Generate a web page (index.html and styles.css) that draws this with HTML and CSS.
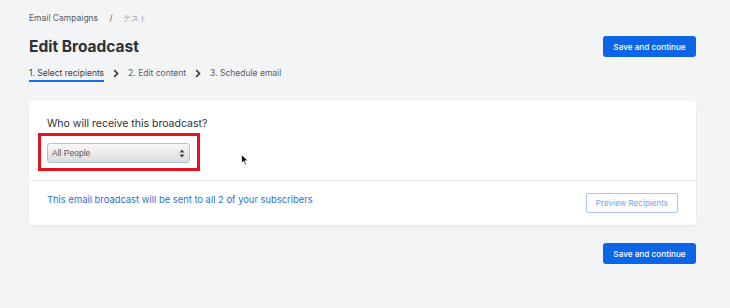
FILE: index.html
```html
<html lang="en">
<head>
    <meta charset="UTF-8">
    <title>Edit Broadcast</title>
    <link rel="stylesheet" href="styles.css">
</head>
<body>
    <div class="page">
        <div class="crumbs">
            <span class="crumb-link">Email Campaigns</span>
            <span class="crumb-sep">/</span>
            <span class="crumb-current">テスト</span>
        </div>
        <div class="head-row">
            <h1 class="title">Edit Broadcast</h1>
            <button class="btn-primary">Save and continue</button>
        </div>
        <div class="steps">
            <span class="step active">1. Select recipients</span>
            <svg class="chev" width="6" height="9" viewBox="0 0 6 9"><path d="M1.2 1.2 L4.5 4.5 L1.2 7.8" fill="none" stroke="#3a3d42" stroke-width="1.7"/></svg>
            <span class="step">2. Edit content</span>
            <svg class="chev" width="6" height="9" viewBox="0 0 6 9"><path d="M1.2 1.2 L4.5 4.5 L1.2 7.8" fill="none" stroke="#3a3d42" stroke-width="1.7"/></svg>
            <span class="step">3. Schedule email</span>
        </div>

        <div class="card">
            <div class="card-top">
                <div class="question">Who will receive this broadcast?</div>
                <div class="highlight">
                    <div class="fake-select">
                        <span>All People</span>
                        <svg width="6" height="9" viewBox="0 0 6 9"><path d="M3 0.5 L5.5 3.5 L0.5 3.5 Z M3 8.5 L5.5 5.5 L0.5 5.5 Z" fill="#444"/></svg>
                    </div>
                </div>
            </div>
            <div class="card-bottom">
                <span class="sent-note">This email broadcast will be sent to all 2 of your subscribers</span>
                <button class="btn-outline">Preview Recipients</button>
            </div>
        </div>

        <div class="foot-row">
            <button class="btn-primary">Save and continue</button>
        </div>
    </div>

    <!-- mouse pointer captured in the screenshot -->
    <svg class="cursor" width="8" height="12" viewBox="0 0 8 12"><path d="M0.5 0.5 L0.5 9 L2.6 7.2 L4 10.8 L5.4 10.2 L4 6.8 L7 6.8 Z" fill="#111" stroke="#fff" stroke-width="0.8"/></svg>
</body>
</html>
```

FILE: styles.css
```css
* {
    box-sizing: border-box;
    margin: 0;
}
body {
    background: #f3f4f6;
    font-family: 'Inter', 'Noto Sans', sans-serif;
    color: #2e3136;
}
.page {
    padding: 11px 34px 0 29px;
}
.crumbs { /*breadcrumb line*/
    font-size: 8.5px;
    line-height: 14px;
    color: #555a61;
}
.crumb-sep {
    margin: 0 8px 0 9px;
}
.crumb-current {
    color: #9a9ea5;
    font-size: 7.5px;
}
.head-row {
    display: flex;
    justify-content: space-between;
    align-items: center;
    margin-top: 10px;
}
.title {
    font-size: 15.5px;
    line-height: 20px;
    font-weight: 700;
    color: #2e3136;
}
.btn-primary {
    background: #0b65e6;
    color: #fff;
    border: none;
    border-radius: 3px;
    height: 21px;
    width: 93px;
    padding: 0;
    font-family: 'Inter', sans-serif;
    font-size: 8.2px;
    font-weight: 500;
}
.steps { /*step tabs*/
    display: flex;
    align-items: center;
    margin-top: 9px;
    font-size: 8.5px;
    line-height: 14px;
    color: #595d64;
}
.step {
    border-bottom: 2px solid transparent;
}
.step.active {
    border-bottom-color: #1a6ef0;
    color: #3a3d42;
}
.chev {
    margin: 0 9px 2px 9px;
}
.card {
    margin-top: 19px;
    background: #fff;
    border-radius: 3px;
    box-shadow: 0 1px 3px rgba(0, 0, 0, 0.06);
}
.card-top {
    padding: 15px 18px 9px 18px;
    border-bottom: 1px solid #ececee;
}
.question {
    font-size: 10.5px;
    line-height: 16px;
    color: #2e3136;
}
.highlight { /*red annotation box*/
    width: fit-content;
    margin: 1px 0 0 -9px;
    border: 3px solid #e3121d;
    padding: 7px 7px 5px 6px;
}
.fake-select {
    width: 143px;
    height: 20px;
    border: 1px solid #a9c3e6;
    border-radius: 3px;
    background: linear-gradient(#f7f7f7, #dcdcdc);
    display: flex;
    align-items: center;
    justify-content: space-between;
    padding: 0 4px 0 4px;
    font-family: 'Liberation Sans', Arial, sans-serif;
    font-size: 8.5px;
    color: #555;
}
.card-bottom {
    display: flex;
    justify-content: space-between;
    align-items: flex-start;
    padding: 12px 18px;
}
.sent-note {
    font-size: 9.4px;
    line-height: 14px;
    color: #2d6fdc;
}
.btn-outline {
    height: 20px;
    width: 92px;
    padding: 0;
    background: #fff;
    border: 1px solid #a7c6f5;
    border-radius: 2px;
    color: #7aa3e6;
    font-family: 'Inter', sans-serif;
    font-size: 8.1px;
}
.foot-row {
    display: flex;
    justify-content: flex-end;
    margin-top: 18px;
}
.cursor {
    position: absolute;
    left: 241px;
    top: 154px;
}
```
